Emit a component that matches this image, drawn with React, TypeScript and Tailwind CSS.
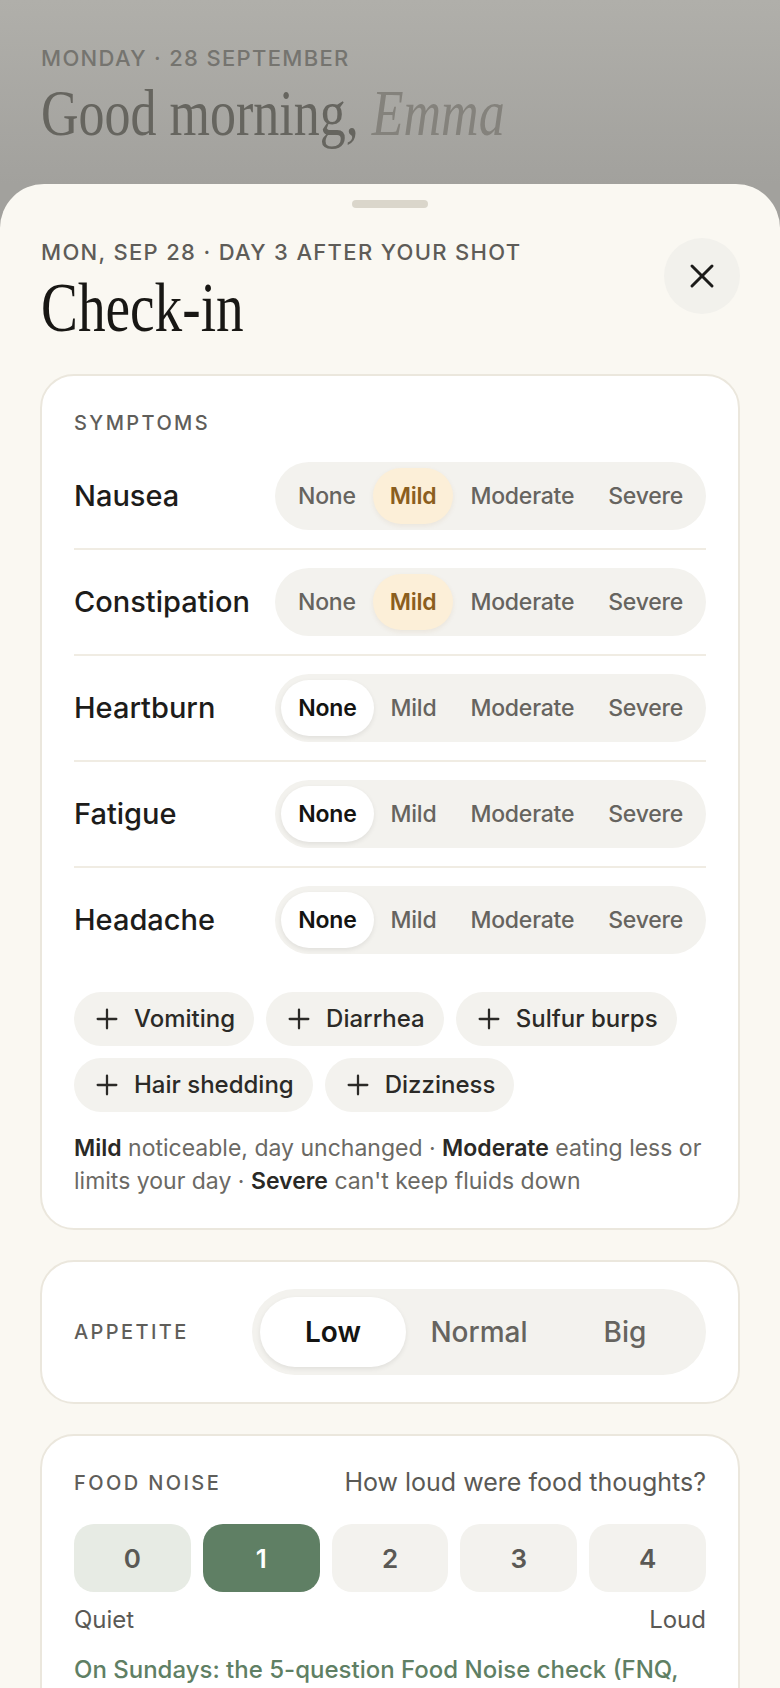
import { X, Plus } from "lucide-react";
import clsx from "clsx";

const levels = ["None", "Mild", "Moderate", "Severe"];

const symptoms = [
  { name: "Nausea", value: "Mild" },
  { name: "Constipation", value: "Mild" },
  { name: "Heartburn", value: "None" },
  { name: "Fatigue", value: "None" },
  { name: "Headache", value: "None" },
];

const extras = ["Vomiting", "Diarrhea", "Sulfur burps", "Hair shedding", "Dizziness"];

function Severity({ value }: { value: string }) {
  return (
    <div className="flex items-center rounded-full bg-[#f3f2ee] p-[6px]">
      {levels.map((l) => {
        const on = l === value;
        return (
          <span
            key={l}
            className={clsx(
              "flex h-[56px] items-center rounded-full px-[17px] text-[23px] tracking-[-0.01em]",
              on && l === "None" && "bg-white font-semibold text-[#141412] shadow-[0_2px_5px_rgba(0,0,0,0.08)]",
              on && l !== "None" && "bg-[#fcefd8] font-semibold text-[#8b5e1e] shadow-[0_2px_5px_rgba(139,94,30,0.08)]",
              !on && "font-medium text-[#66645f]"
            )}
          >
            {l}
          </span>
        );
      })}
    </div>
  );
}

export default function App() {
  return (
    <div className="h-screen overflow-hidden bg-[#a2a19d] font-['Inter','Noto_Sans',sans-serif]">
      {/* Dimmed home screen behind the sheet */}
      <div className="h-[184px] bg-linear-to-b from-[#b0afaa] to-[#a2a19d] px-[41px] pt-[44px]">
        <p className="text-[22px] leading-[28px] font-medium tracking-[0.06em] text-[#75746f]">
          MONDAY · 28 SEPTEMBER
        </p>
        <h1 className="mt-[9px] inline-block origin-left scale-x-[0.8] whitespace-nowrap font-['Liberation_Serif',serif] text-[65px] leading-[64px] text-[#66655f]">
          Good morning, <em className="text-[#84827c]">Emma</em>
        </h1>
      </div>

      {/* Check-in sheet */}
      <div className="min-h-[1600px] rounded-t-[44px] bg-[#faf8f2] px-[40px]">
        <div className="flex justify-center pt-[16px]">
          <div className="h-[8px] w-[76px] rounded-full bg-[#dad6cb]" />
        </div>

        <div className="mt-[30px] flex items-start justify-between">
          <div className="pl-px">
            <p className="text-[22px] leading-[28px] font-medium tracking-[0.06em] text-[#5e5c58]">
              MON, SEP 28 · DAY 3 AFTER YOUR SHOT
            </p>
            <h2 className="mt-[7px] inline-block origin-left scale-x-[0.79] font-['Liberation_Serif',serif] text-[70px] leading-[70px] text-[#181714]">
              Check-in
            </h2>
          </div>
          <button className="flex h-[76px] w-[76px] items-center justify-center rounded-full bg-[#f2f1ec] text-[#1c1b19]">
            <X size={40} strokeWidth={1.8} />
          </button>
        </div>

        {/* Symptoms */}
        <section className="mt-[31px] rounded-[34px] border-2 border-[#ebe7dd] bg-white px-[32px] pt-[32px] pb-[30px]">
          <p className="text-[20px] leading-[30px] font-medium tracking-[0.12em] text-[#5f5e5a]">SYMPTOMS</p>
          <div className="mt-[6px]">
            {symptoms.map((s, i) => (
              <div
                key={s.name}
                className={clsx(
                  "flex items-center justify-between py-[18px]",
                  i < symptoms.length - 1 && "border-b-2 border-[#f0ece3]"
                )}
              >
                <span className="text-[29px] font-medium text-[#1d1c1a]">{s.name}</span>
                <Severity value={s.value} />
              </div>
            ))}
          </div>

          <div className="mt-[20px] flex flex-wrap gap-[12px]">
            {extras.map((e) => (
              <span
                key={e}
                className="flex h-[54px] items-center gap-[11px] rounded-full bg-[#f3f2ee] pr-[19px] pl-[17px] text-[24px] font-medium text-[#2b2a27]"
              >
                <Plus size={32} strokeWidth={1.7} />
                {e}
              </span>
            ))}
          </div>

          <p className="mt-[20px] text-[23px] leading-[33px] text-[#6b6964]">
            <b className="font-semibold text-[#2a2926]">Mild</b> noticeable, day unchanged ·{" "}
            <b className="font-semibold text-[#2a2926]">Moderate</b> eating less or limits your day ·{" "}
            <b className="font-semibold text-[#2a2926]">Severe</b> can't keep fluids down
          </p>
        </section>

        {/* Appetite */}
        <section className="mt-[30px] flex items-center justify-between rounded-[34px] border-2 border-[#ebe7dd] bg-white px-[32px] py-[27px]">
          <p className="text-[20px] font-medium tracking-[0.12em] text-[#5f5e5a]">APPETITE</p>
          <div className="flex w-[454px] rounded-full bg-[#f3f2ee] p-[8px]">
            <span className="flex h-[70px] flex-1 items-center justify-center rounded-full bg-white text-[28px] font-semibold text-[#141412] shadow-[0_2px_5px_rgba(0,0,0,0.08)]">
              Low
            </span>
            <span className="flex h-[70px] flex-1 items-center justify-center text-[28px] font-medium text-[#66645f]">
              Normal
            </span>
            <span className="flex h-[70px] flex-1 items-center justify-center text-[28px] font-medium text-[#66645f]">
              Big
            </span>
          </div>
        </section>

        {/* Food noise */}
        <section className="mt-[30px] rounded-[34px] border-2 border-[#ebe7dd] bg-white px-[32px] pt-[32px] pb-[30px]">
          <div className="flex h-[30px] items-center justify-between">
            <p className="text-[20px] font-medium tracking-[0.12em] text-[#5f5e5a]">FOOD NOISE</p>
            <p className="text-[25px] text-[#5a5955]">How loud were food thoughts?</p>
          </div>
          <div className="mt-[26px] grid grid-cols-5 gap-[12px]">
            {[0, 1, 2, 3, 4].map((n) => (
              <span
                key={n}
                className={clsx(
                  "flex h-[68px] items-center justify-center rounded-[20px] text-[26px] font-semibold",
                  n === 1 ? "bg-[#5f7f64] text-white" : n === 0 ? "bg-[#e7ebe4] text-[#5a5955]" : "bg-[#f3f2ee] text-[#5a5955]"
                )}
              >
                {n}
              </span>
            ))}
          </div>
          <div className="mt-[13px] flex justify-between text-[24px] leading-[30px] text-[#5a5955]">
            <span>Quiet</span>
            <span>Loud</span>
          </div>
          <p className="mt-[18px] text-[24px] leading-[34px] font-medium text-[#5f7f64]">
            On Sundays: the 5-question Food Noise check (FNQ, about one minute)
          </p>
        </section>
      </div>
    </div>
  );
}
